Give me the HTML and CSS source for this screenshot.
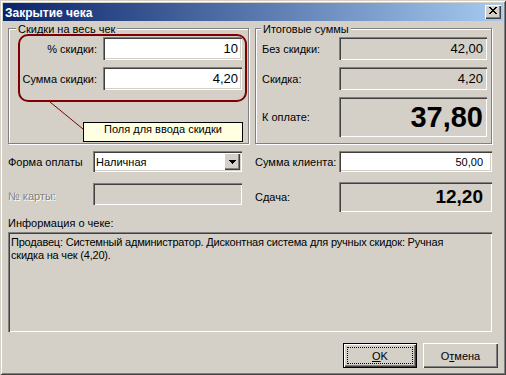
FILE: index.html
```html
<!DOCTYPE html>
<html lang="ru">
<head>
    <meta charset="UTF-8">
    <meta name="viewport" content="width=device-width, initial-scale=1.0">
    <title>Закрытие чека</title>
    <link rel="stylesheet" href="styles.css">
</head>
<body>

<div class="window">
    <div class="titlebar">
        <span class="title">Закрытие чека</span>
        <button class="close-btn" type="button">
            <svg width="8" height="7" viewBox="0 0 8 7" shape-rendering="crispEdges">
                <path d="M0 0h2v1H0zM6 0h2v1H6zM1 1h2v1H1zM5 1h2v1H5zM2 2h4v1H2zM3 3h2v1H3zM2 4h4v1H2zM1 5h2v1H1zM5 5h2v1H5zM0 6h2v1H0zM6 6h2v1H6z" fill="#000"/>
            </svg>
        </button>
    </div>

    <div class="client">
        <div class="main-grid">
            <!-- Discount for the whole receipt -->
            <div class="group discount-group">
                <span class="group-title">Скидки на весь чек</span>
                <div class="highlight">
                    <div class="field-row">
                        <label class="lbl" for="percent">% скидки:</label>
                        <input class="edit value" id="percent" type="text" value="10">
                    </div>
                    <div class="field-row">
                        <label class="lbl" for="discount-sum">Сумма скидки:</label>
                        <input class="edit value" id="discount-sum" type="text" value="4,20">
                    </div>
                </div>
                <svg class="callout">
                    <line x1="41" y1="73" x2="74" y2="100" stroke="#800000" stroke-width="1"/>
                </svg>
                <div class="hint">Поля для ввода скидки</div>
            </div>

            <!-- Totals -->
            <div class="group totals-group">
                <span class="group-title">Итоговые суммы</span>
                <div class="field-row">
                    <span class="lbl">Без скидки:</span>
                    <div class="readonly value">42,00</div>
                </div>
                <div class="field-row">
                    <span class="lbl">Скидка:</span>
                    <div class="readonly value">4,20</div>
                </div>
                <div class="field-row">
                    <span class="lbl">К оплате:</span>
                    <div class="readonly big">37,80</div>
                </div>
            </div>

            <div class="cell">
                <span class="cell-lbl">Форма оплаты</span>
                <div class="combo">
                    <span class="combo-text">Наличная</span>
                    <span class="combo-btn">
                        <svg width="7" height="4" viewBox="0 0 7 4" shape-rendering="crispEdges">
                            <path d="M0 0h7v1H0zM1 1h5v1H1zM2 2h3v1H2zM3 3h1v1H3z" fill="#000"/>
                        </svg>
                    </span>
                </div>
            </div>

            <div class="cell">
                <label class="cell-lbl wide" for="client-sum">Сумма клиента:</label>
                <input class="edit client-sum" id="client-sum" type="text" value="50,00">
            </div>

            <div class="cell card-cell">
                <span class="cell-lbl disabled">№ карты:</span>
                <div class="card-field"></div>
            </div>

            <div class="cell change-cell">
                <span class="cell-lbl wide">Сдача:</span>
                <div class="readonly change">12,20</div>
            </div>
        </div>

        <div class="info-label">Информация о чеке:</div>
        <div class="memo">
            Продавец: Системный администратор. Дисконтная система для ручных скидок: Ручная<br>
            скидка на чек (4,20).
        </div>

        <div class="buttons">
            <button class="btn btn-default" type="button"><span class="focus"><u>O</u>K</span></button>
            <button class="btn" type="button">О<u>т</u>мена</button>
        </div>
    </div>
</div>

</body>
</html>
```

FILE: styles.css
```css
* {
    box-sizing: border-box;
}

body {
    margin: 0;
    background-color: #d4d0c8;
    font-family: "Liberation Sans", Arial, sans-serif;
    font-size: 11px;
    color: #000;
}

input,
button {
    font-family: inherit;
    font-size: inherit;
    color: #000;
    border: none;
    outline: none;
    margin: 0;
}

.window {
    width: 506px;
    height: 375px;
    padding: 3px;
    display: flex;
    flex-direction: column;
    background-color: #d4d0c8;
    box-shadow: inset 1px 1px #d4d0c8, inset -1px -1px #404040, inset 2px 2px #fff, inset -2px -2px #808080;
}

/* Title bar */
.titlebar {
    height: 18px;
    display: flex;
    align-items: center;
    justify-content: space-between;
    padding: 0 2px;
    background: linear-gradient(to right, #0a246a, #a6caf0);
}

.title {
    color: #fff;
    font-size: 12px;
    font-weight: bold;
    padding-top: 1px;
}

.close-btn {
    width: 16px;
    height: 14px;
    padding: 2px 0 0;
    display: flex;
    justify-content: center;
    align-items: flex-start;
    background-color: #d4d0c8;
    box-shadow: inset 1px 1px #fff, inset -1px -1px #404040, inset -2px -2px #808080;
}

/* Client area */
.client {
    flex: 1;
    padding: 7px 5px 4px 5px;
    display: flex;
    flex-direction: column;
}

.main-grid {
    display: grid;
    grid-template-columns: 241px 237px;
    grid-template-rows: auto 21px 33px;
    column-gap: 6px;
    row-gap: 7px;
}

/* Group boxes */
.group {
    position: relative;
    border: 1px solid #808080;
    box-shadow: inset 1px 1px #fff, 1px 1px #fff;
}

.group-title {
    display: block;
    width: max-content;
    margin-top: -6px;
    padding: 0 2px;
    line-height: 13px;
    background-color: #d4d0c8;
}

.discount-group {
    padding: 0 1px 1px 9px;
}

.discount-group .group-title {
    margin-left: -2px;
}

.highlight {
    margin-top: -2px;
    padding: 1px 3px 10px 0;
    display: flex;
    flex-direction: column;
    gap: 7px;
    border: 2px solid #800000;
    border-radius: 10px;
}

.field-row {
    display: flex;
    align-items: center;
    gap: 6px;
}

.discount-group .lbl {
    width: 77px;
    text-align: right;
}

.callout {
    position: absolute;
    left: 0;
    top: 0;
    width: 100%;
    height: 100%;
    overflow: visible;
    pointer-events: none;
}

.hint {
    width: 160px;
    height: 20px;
    margin: 20px 0 0 65px;
    border: 1px solid #000;
    background-color: #ffffe1;
    text-align: center;
    line-height: 13px;
}

.totals-group {
    padding: 0 3px 0 6px;
}

.totals-group .group-title {
    margin-left: -1px;
}

.totals-group .field-row {
    gap: 0;
    margin-top: 7px;
}

.totals-group .group-title + .field-row {
    margin-top: 1px;
}

.totals-group .lbl {
    width: 77px;
}

/* Edits */
.edit,
.readonly,
.combo,
.card-field,
.memo {
    box-shadow: inset 1px 1px #808080, inset 2px 2px #404040, inset -1px -1px #fff, inset -2px -2px #d4d0c8;
}

.edit {
    width: 139px;
    height: 23px;
    padding: 0 4px;
    background-color: #fff;
    text-align: right;
}

.value {
    font-size: 13px;
}

.readonly {
    width: 148px;
    height: 23px;
    padding: 0 4px;
    display: flex;
    align-items: center;
    justify-content: flex-end;
    background-color: #d4d0c8;
}

.readonly.big {
    height: 40px;
    font-size: 29px;
    font-weight: bold;
}

/* Lower rows */
.cell {
    display: flex;
    align-items: center;
}

.cell-lbl {
    width: 85px;
}

.cell-lbl.wide {
    width: 84px;
}

.cell-lbl.disabled {
    color: #808080;
    text-shadow: 1px 1px #fff;
}

.combo {
    width: 149px;
    height: 21px;
    padding: 2px;
    display: flex;
    align-items: center;
    justify-content: space-between;
    background-color: #fff;
}

.combo-text {
    padding-left: 1px;
}

.combo-btn {
    width: 16px;
    height: 17px;
    display: flex;
    align-items: center;
    justify-content: center;
    background-color: #d4d0c8;
    box-shadow: inset 1px 1px #fff, inset -1px -1px #404040, inset -2px -2px #808080;
}

.client-sum {
    flex: 1;
    height: 21px;
    padding-right: 9px;
}

.card-cell,
.change-cell {
    margin-top: 3px;
    align-items: flex-start;
}

.card-cell {
    padding-top: 1px;
}

.card-cell .cell-lbl {
    line-height: 22px;
    padding-top: 2px;
}

.card-field {
    width: 149px;
    height: 22px;
    background-color: #d4d0c8;
}

.change-cell {
    align-items: center;
}

.readonly.change {
    flex: 1;
    height: 30px;
    padding-right: 9px;
    font-size: 19px;
    font-weight: bold;
}

/* Info memo */
.info-label {
    margin-top: 5px;
    line-height: 13px;
}

.memo {
    width: 484px;
    height: 100px;
    margin-top: 2px;
    padding: 4px 3px;
    line-height: 13px;
    letter-spacing: -0.2px;
    background-color: #d4d0c8;
}

/* Dialog buttons */
.buttons {
    margin-top: 11px;
    display: flex;
    justify-content: flex-end;
    gap: 6px;
}

.btn {
    width: 75px;
    height: 25px;
    padding: 0;
    background-color: #d4d0c8;
    box-shadow: inset 1px 1px #fff, inset -1px -1px #404040, inset -2px -2px #808080;
}

.btn-default {
    width: 74px;
    padding: 3px;
    border: 1px solid #000;
}

.focus {
    display: flex;
    align-items: center;
    justify-content: center;
    height: 100%;
    border: 1px dotted #000;
}
```
